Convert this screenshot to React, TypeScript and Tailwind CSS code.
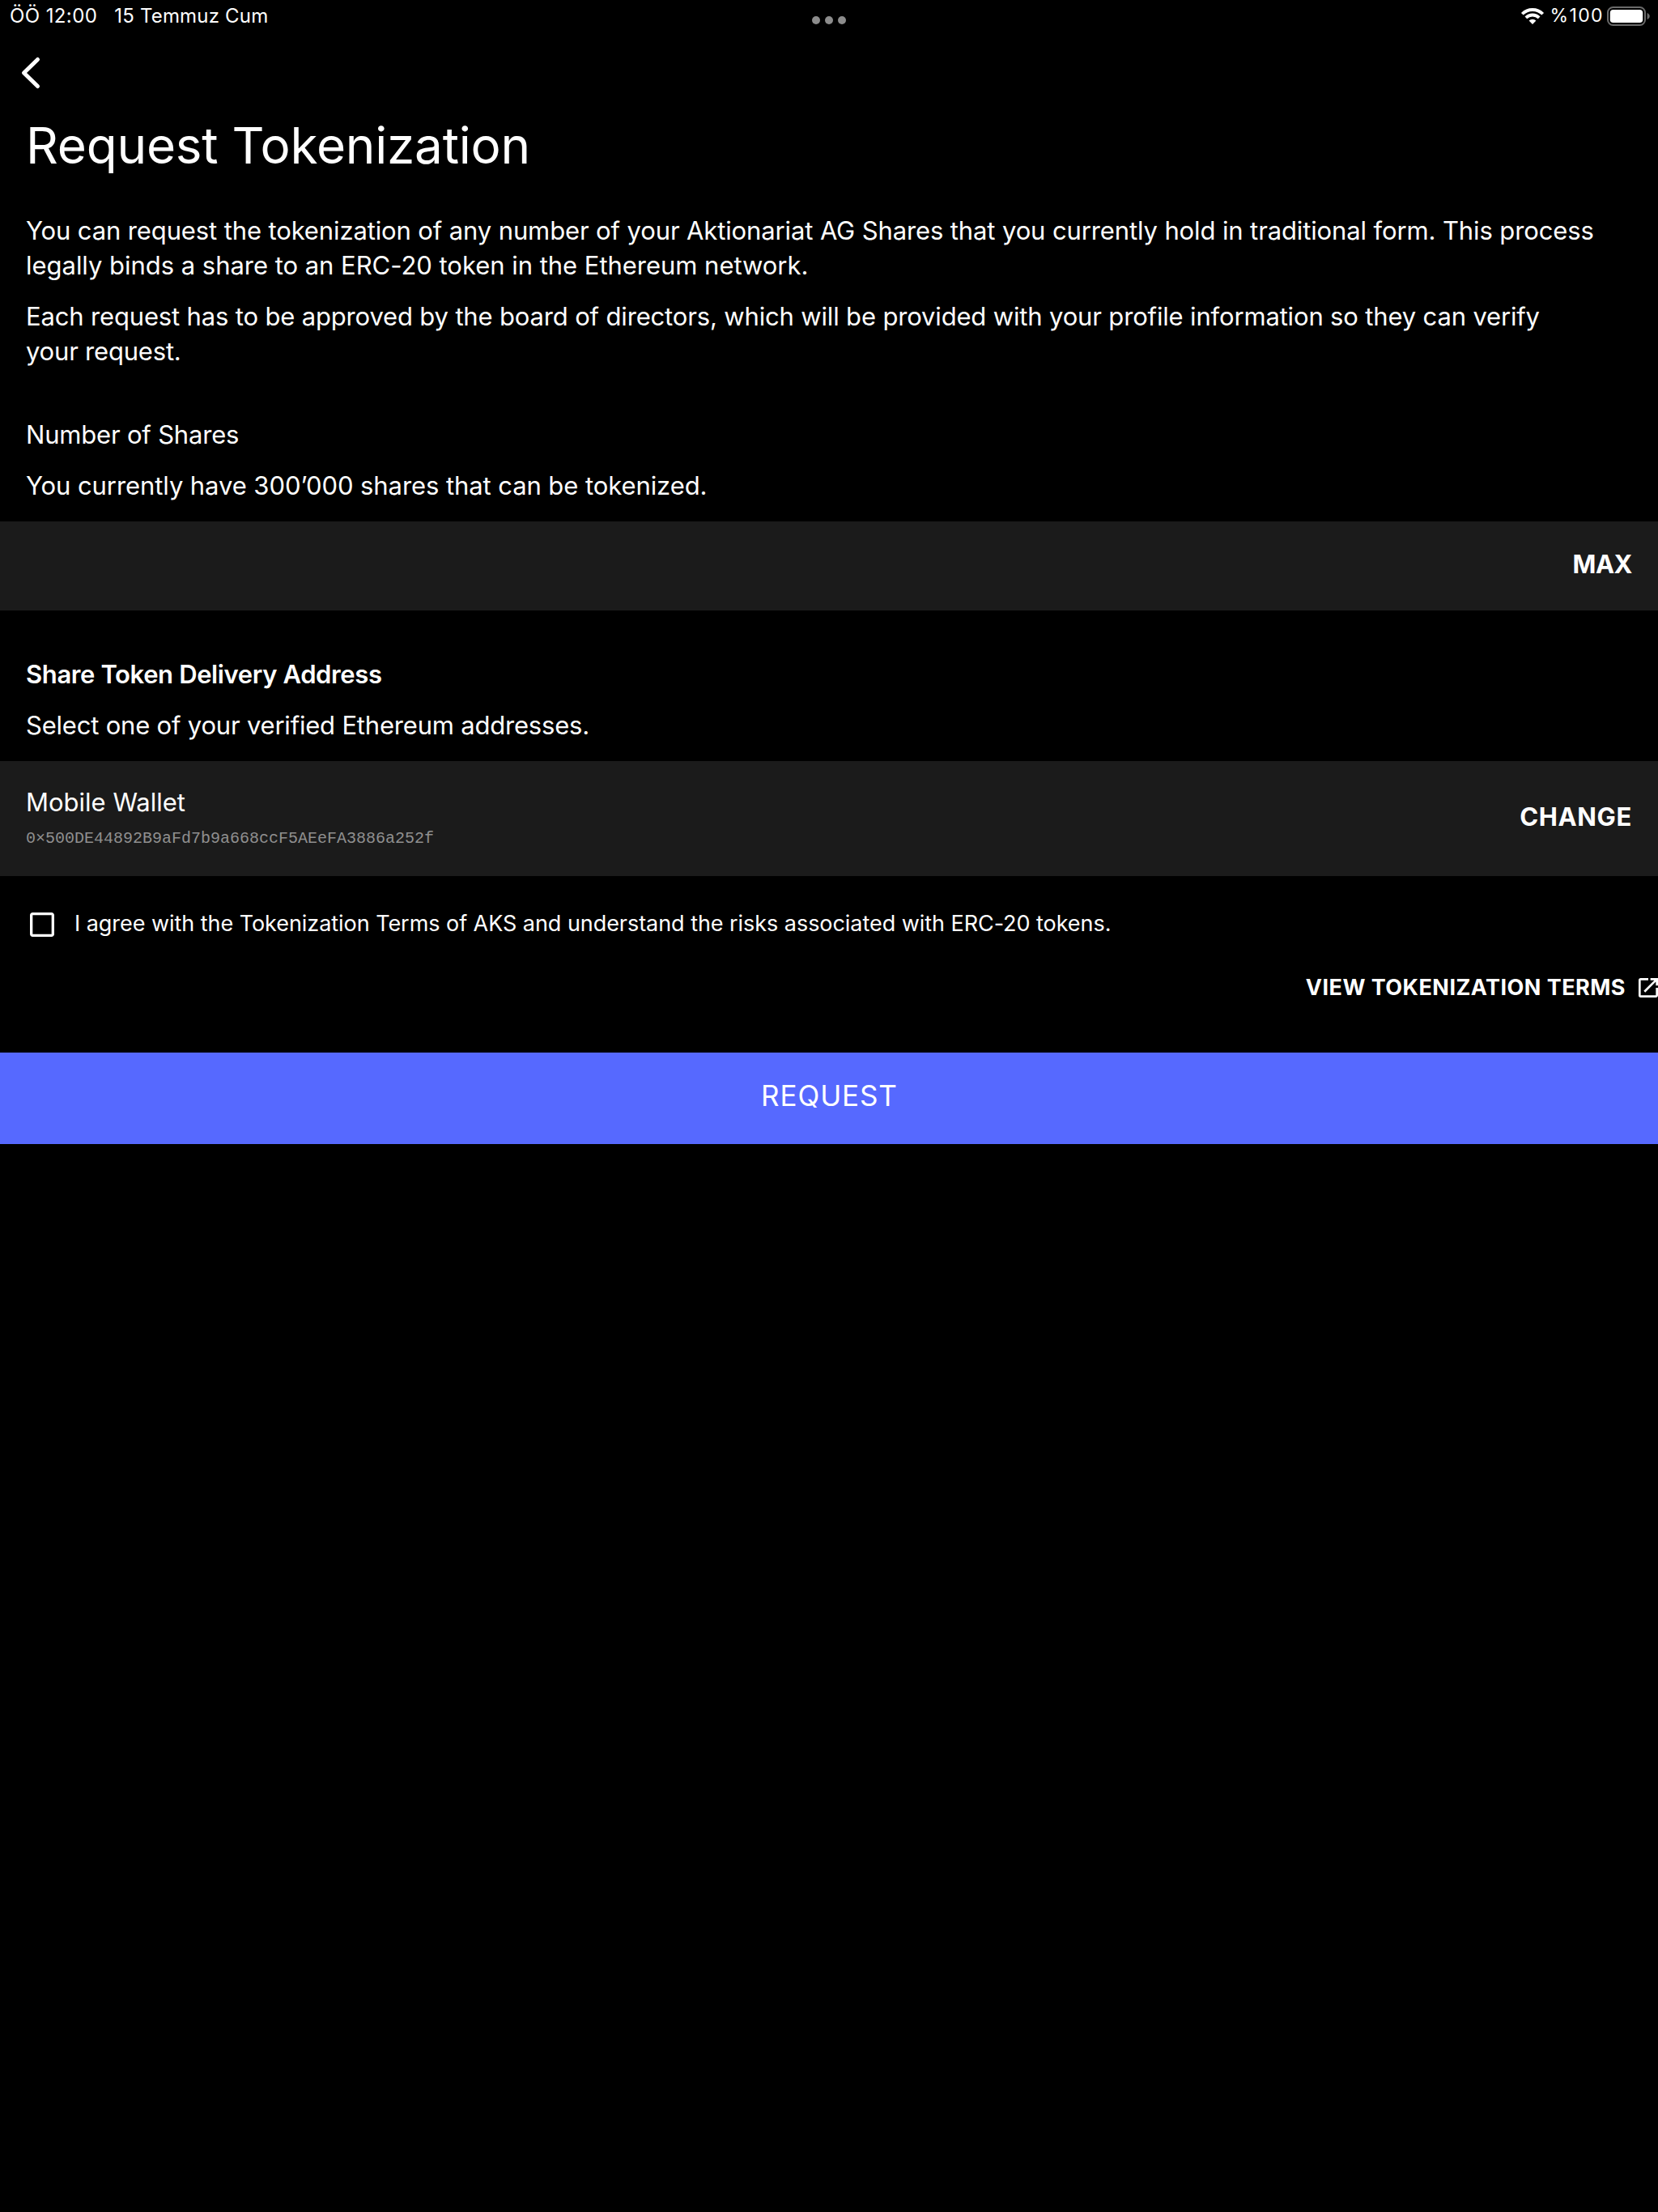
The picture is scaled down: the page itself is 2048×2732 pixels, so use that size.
import { useState } from "react"
import { MdCheckBox, MdCheckBoxOutlineBlank, MdOpenInNew } from "react-icons/md"

function StatusBar() {
    return (
        <div className="grid h-[50px] grid-cols-[1fr_auto_1fr] text-2xl leading-[29px]">
            <div className="flex gap-[21px] pt-[5px] pl-3">
                <span className="tracking-[0.4px]">ÖÖ 12:00</span>
                <span className="tracking-[0.19px]">15 Temmuz Cum</span>
            </div>

            <div className="flex gap-1.5 pt-5">
                <span className="size-2.5 rounded-full bg-[#8c8c8c]" />
                <span className="size-2.5 rounded-full bg-[#8c8c8c]" />
                <span className="size-2.5 rounded-full bg-[#8c8c8c]" />
            </div>

            <div className="flex justify-end pt-[5px] pr-2">
                <svg className="mt-[3px] mr-1.5 h-6 w-[30px]" viewBox="0 0 30 24" fill="none">
                    <path d="M2.27 9.27a18 18 0 0 1 25.46 0" stroke="#fff" strokeWidth="3.8" />
                    <path d="M6.87 13.87a11.5 11.5 0 0 1 16.26 0" stroke="#fff" strokeWidth="3.8" />
                    <path d="M15 22l-4.4-4.4a6.2 6.2 0 0 1 8.8 0z" fill="#fff" />
                </svg>
                <span className="mr-[3px] text-[23px] tracking-[1.4px]">%100</span>
                <svg className="mt-px h-7 w-14" viewBox="0 0 56 28">
                    <rect x="2" y="3" width="46" height="22" rx="6.5" fill="none" stroke="#6b6b6b" strokeWidth="2" />
                    <rect x="4.8" y="6" width="40.4" height="16" rx="3.8" fill="#fff" />
                    <path d="M50.6 10c4.2 1.4 4.2 6.6 0 8z" fill="#6b6b6b" />
                </svg>
            </div>
        </div>
    )
}

export default function App() {
    const [shares, setShares] = useState("")
    const [agreed, setAgreed] = useState(false)

    return (
        <div className="flex min-h-[2732px] w-full flex-col overflow-x-hidden bg-black font-['Inter','Liberation_Sans',sans-serif] text-[31px] leading-[43px] text-white">
            <StatusBar />

            <header className="px-6 pt-[18px]">
                <button className="block" aria-label="Back">
                    <svg className="h-11 w-8" viewBox="0 0 32 44" fill="none" stroke="#fff" strokeWidth={5} strokeLinecap="round" strokeLinejoin="round">
                        <path d="M22.5 5.5L5.5 22l17 16.5" />
                    </svg>
                </button>
            </header>

            <h1 className="mt-[30px] px-8 text-[62px] leading-[75px] tracking-[-0.22px]">Request Tokenization</h1>

            <section className="mt-[46px] px-8 whitespace-nowrap">
                <p>
                    <span className="block tracking-[-0.12px]">You can request the tokenization of any number of your Aktionariat AG Shares that you currently hold in traditional form. This process</span>
                    <span className="block tracking-[-0.03px]">legally binds a share to an ERC-20 token in the Ethereum network.</span>
                </p>
                <p className="mt-5">
                    <span className="block tracking-[-0.16px]">Each request has to be approved by the board of directors, which will be provided with your profile information so they can verify</span>
                    <span className="block tracking-[-0.2px]">your request.</span>
                </p>
            </section>

            <section className="mt-[60px]">
                <h2 className="px-8 tracking-[-0.19px]">Number of Shares</h2>
                <p className="mt-5 px-8 tracking-[-0.08px]">You currently have 300’000 shares that can be tokenized.</p>
                <div className="mt-[23px] flex h-[110px] items-center bg-[#1b1b1b] px-8 pb-[5px]">
                    <input
                        className="min-w-0 flex-1 bg-transparent outline-none"
                        value={shares}
                        onChange={(e) => setShares(e.target.value)}
                    />
                    <button className="font-bold tracking-[-0.5px]" onClick={() => setShares("300000")}>MAX</button>
                </div>
            </section>

            <section className="mt-[57px]">
                <h2 className="px-8 font-semibold tracking-[-0.38px]">Share Token Delivery Address</h2>
                <p className="mt-5 px-8 tracking-[-0.2px]">Select one of your verified Ethereum addresses.</p>
                <div className="mt-[23px] flex h-[142px] items-center justify-between bg-[#1b1b1b] px-8 pb-[5px]">
                    <div>
                        <p>Mobile Wallet</p>
                        <p className="mt-3 font-['Liberation_Mono',monospace] text-xl leading-6 text-[#8f8f8f]">
                            0×500DE44892B9aFd7b9a668ccF5AEeFA3886a252f
                        </p>
                    </div>
                    <button className="font-bold tracking-[0.65px]">CHANGE</button>
                </div>
            </section>

            <label className="mt-10 flex h-10 gap-5 px-8 text-[27px] leading-[38px] tracking-[-0.05px]">
                <input type="checkbox" className="sr-only" checked={agreed} onChange={() => setAgreed(!agreed)} />
                {agreed ? <MdCheckBox size={40} /> : <MdCheckBoxOutlineBlank size={40} />}
                <span>I agree with the Tokenization Terms of AKS and understand the risks associated with ERC-20 tokens.</span>
            </label>

            <a className="mt-[42px] -mr-1 flex h-8 items-center justify-end gap-3 text-[27px] leading-8 font-bold tracking-[0.46px]">
                VIEW TOKENIZATION TERMS
                <MdOpenInNew size={32} />
            </a>

            <button className="mt-16 h-[113px] w-full bg-[#5669ff] pb-[6px] pl-px text-[35px] tracking-[0.9px]">
                REQUEST
            </button>
        </div>
    )
}
